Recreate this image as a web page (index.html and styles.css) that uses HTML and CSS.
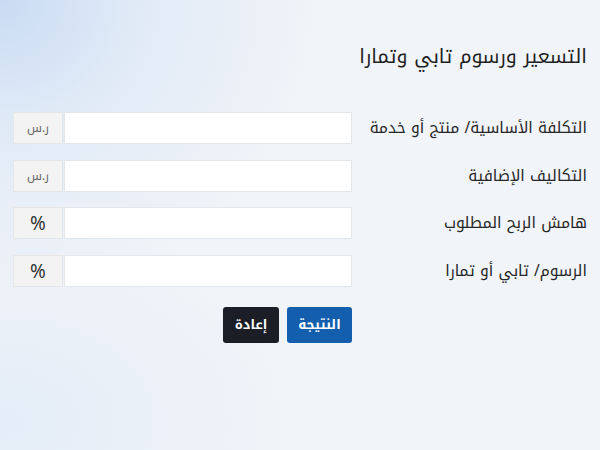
FILE: index.html
```html
<!DOCTYPE html>
<html lang="ar" dir="rtl">
<head>
    <meta charset="UTF-8">
    <meta name="viewport" content="width=device-width, initial-scale=1.0">
    <title>التسعير ورسوم تابي وتمارا</title>
    <link rel="stylesheet" href="styles.css">
</head>
<body>
    <div class="container">
        <h1 class="page-title">التسعير ورسوم تابي وتمارا</h1>

        <form class="pricing-form">
            <div class="form-row">
                <label class="row-label" for="base-cost">التكلفة الأساسية/ منتج أو خدمة</label>
                <div class="input-group">
                    <input type="number" id="base-cost" class="input-field">
                    <span class="addon addon-small">ر.س</span>
                </div>
            </div>

            <div class="form-row">
                <label class="row-label" for="extra-cost">التكاليف الإضافية</label>
                <div class="input-group">
                    <input type="number" id="extra-cost" class="input-field">
                    <span class="addon addon-small">ر.س</span>
                </div>
            </div>

            <div class="form-row">
                <label class="row-label" for="margin">هامش الربح المطلوب</label>
                <div class="input-group">
                    <input type="number" id="margin" class="input-field">
                    <span class="addon">%</span>
                </div>
            </div>

            <div class="form-row">
                <label class="row-label" for="fees">الرسوم/ تابي أو تمارا</label>
                <div class="input-group">
                    <input type="number" id="fees" class="input-field">
                    <span class="addon">%</span>
                </div>
            </div>

            <!-- buttons sit under the inputs column -->
            <div class="button-row">
                <button type="button" class="btn btn-primary">النتيجة</button>
                <button type="reset" class="btn btn-dark">إعادة</button>
            </div>
        </form>
    </div>
</body>
</html>
```

FILE: styles.css
```css
html, body {
    margin: 0;
    height: 100%;
}
body {
    font-family: "Noto Kufi Arabic", "Noto Sans Arabic", "Noto Sans", "DejaVu Sans", sans-serif;
    color: #222;
    background:
        radial-gradient(ellipse 320px 300px at 0 0, #c9dbf3 0%, rgba(214, 228, 246, 0.65) 40%, rgba(240, 244, 249, 0) 100%),
        radial-gradient(ellipse 300px 200px at 0 420px, #e4edf8 0%, rgba(240, 244, 249, 0) 100%),
        #f1f4f8;
    overflow: hidden;
}
.container {
    padding: 42px 13px 0 13px;
}
.page-title {
    margin: 0;
    font-size: 19.5px;
    font-weight: 400;
    line-height: 30px;
    color: #1f1f1f;
}
.pricing-form {
    margin-top: 40px;
}
.form-row {
    display: flex;
    align-items: center;
    height: 32px;
    margin-bottom: 15.6px;
}
.row-label {
    width: 235px;
    font-size: 15.5px;
    white-space: nowrap;
    color: #262626;
}
.input-group {
    display: flex;
    width: 339px;
    height: 32px;
}
.input-field {
    flex: 1;
    margin: 0;
    padding: 0 10px;
    border: 1px solid #e3e6ea;
    background: #fff;
    border-radius: 0;
    outline: none;
    font-size: 14px;
}
.addon {
    width: 50px;
    margin-right: 1px; /* thin gap between field and addon */
    display: flex;
    align-items: center;
    justify-content: center;
    background: #f3f3f3;
    border: 1px solid #e6e6e6;
    box-sizing: border-box;
    font-family: "Noto Sans", "DejaVu Sans", sans-serif;
    font-size: 19px;
    color: #333;
}
.addon-small {
    font-family: "Noto Kufi Arabic", "Noto Sans Arabic", sans-serif;
    font-size: 12px;
    color: #666;
}
.button-row {
    display: flex;
    gap: 8px;
    margin-right: 235px;
    margin-top: 20px;
}
.btn {
    height: 36px;
    border: none;
    border-radius: 3px;
    color: #fff;
    font-family: inherit;
    font-size: 13px;
    font-weight: bold;
    cursor: pointer;
}
.btn-primary {
    width: 65px;
    background-color: #135fad;
}
.btn-dark {
    width: 56px;
    background-color: #1b1e27;
}
```
